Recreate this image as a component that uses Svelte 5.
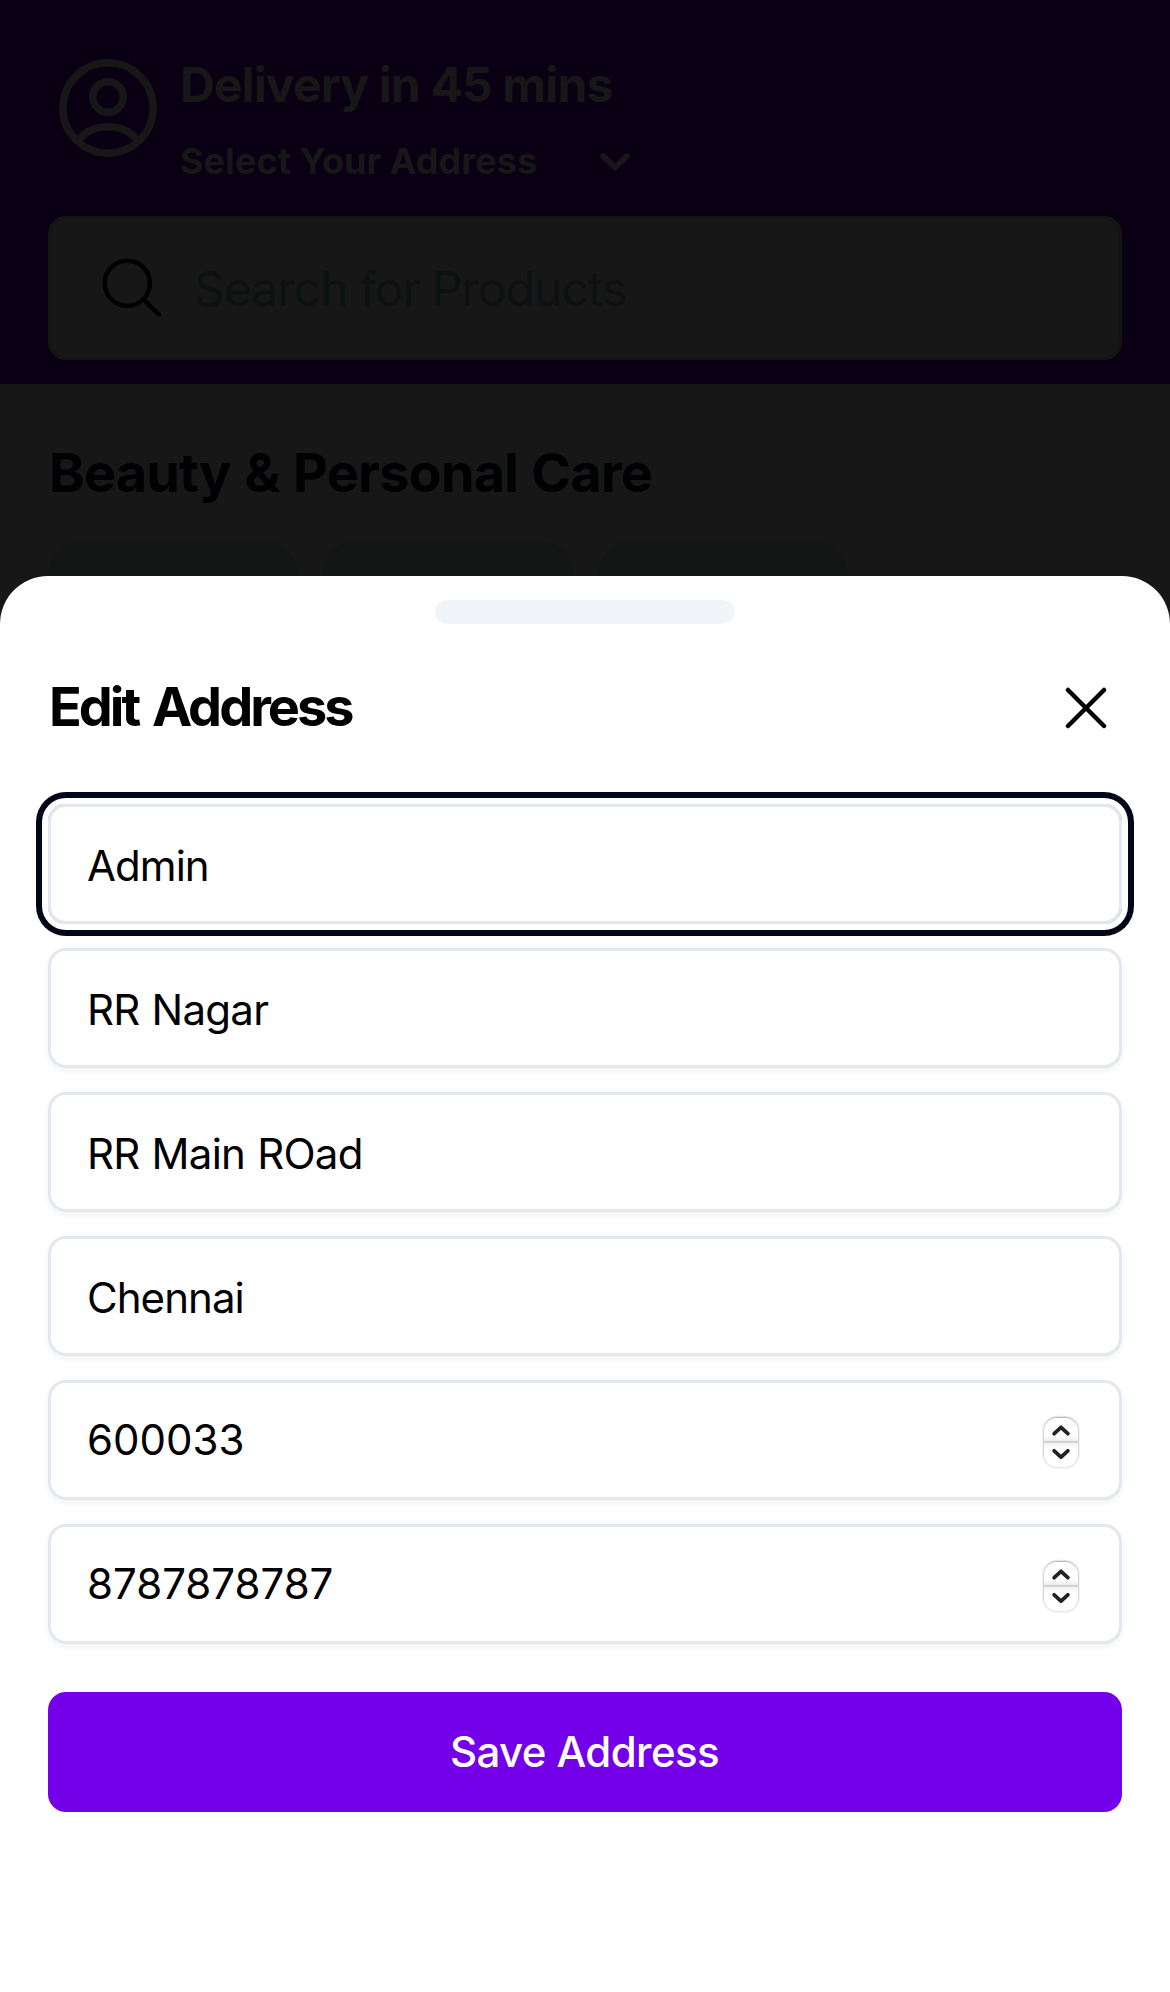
<script>
  const fields = [
    { name: 'name', value: 'Admin', kind: 'short', active: true },
    { name: 'area', value: 'RR Nagar', kind: 'line' },
    { name: 'street', value: 'RR Main ROad', kind: 'line' },
    { name: 'city', value: 'Chennai', kind: 'short' },
    { name: 'pincode', value: '600033', kind: 'numeric' },
    { name: 'phone', value: '8787878787', kind: 'numeric' },
  ];
</script>

<div class="screen">
  <header>
    <div class="top">
      <svg class="user" viewBox="0 0 98 98" fill="none" stroke="currentColor" stroke-width="7.5">
        <circle cx="49" cy="49" r="45.2" />
        <circle cx="49" cy="38" r="15.2" />
        <path d="M20 81C27 71.5 37 67.8 49 67.8S71 71.5 78 81" />
      </svg>
      <div class="where">
        <div class="eta">Delivery in 45 mins</div>
        <div class="pick">
          <span>Select Your Address</span>
          <svg class="chev" viewBox="0 0 30 18" fill="none" stroke="currentColor" stroke-width="6" stroke-linecap="round" stroke-linejoin="round"><path d="M3.2 3.2L15 14.6L26.8 3.2" /></svg>
        </div>
      </div>
    </div>
    <div class="search">
      <svg viewBox="0 0 60 60" fill="none" stroke="#000" stroke-width="4.4" stroke-linecap="round"><circle cx="25.3" cy="25.3" r="22.6" /><path d="M42 42L57 56.5" /></svg>
      <span>Search for Products</span>
    </div>
  </header>
  <section class="catalog">
    <h2>Beauty &amp; Personal Care</h2>
    <div class="cards"><i></i><i></i><i></i></div>
  </section>
  <div class="sheet">
    <div class="grip"></div>
    <div class="title">
      <h1>Edit Address</h1>
      <svg viewBox="0 0 42 42" fill="none" stroke="#000" stroke-width="4.5" stroke-linecap="round"><path d="M3 3L39 39M39 3L3 39" /></svg>
    </div>
    <form>
      {#each fields as f}
        <div class="field {f.kind}" class:active={f.active}>
          <input name={f.name} value={f.value} />
          {#if f.kind === 'numeric'}
            <div class="spin">
              <svg viewBox="0 0 34 50" fill="none" stroke="#222" stroke-width="3.8" stroke-linecap="round" stroke-linejoin="round"><path d="M10 16L17 9.5L24 16M10 33.5L17 40L24 33.5" /></svg>
            </div>
          {/if}
        </div>
      {/each}
      <button type="button">Save Address</button>
    </form>
  </div>
</div>

<style>
  :global(body) { margin: 0; background: #171717; }
  .screen { width: 1170px; height: 1992px; overflow: hidden; display: flex; flex-direction: column; background: #171717; font-family: Inter, 'Liberation Sans', sans-serif; }
  header { box-sizing: border-box; height: 384px; flex: none; padding: 59px 48px 24px; background: #090014; color: #171717; display: flex; flex-direction: column; justify-content: space-between; }
  .top { display: flex; padding-left: 11px; gap: 22px; }
  .user { width: 98px; height: 98px; flex: none; }
  .where { display: flex; flex-direction: column; padding-top: 1px; }
  .eta { padding-left: 1px; font-size: 48px; line-height: 50px; font-weight: 650; letter-spacing: -0.85px; white-space: nowrap; }
  .pick { display: flex; align-items: center; justify-content: space-between; width: 450px; height: 50px; margin-top: 26px; padding-left: 1px; font-size: 36px; line-height: 50px; font-weight: 700; letter-spacing: 0.05px; white-space: nowrap; }
  .chev { width: 30px; height: 18px; margin-top: 1px; }
  .search { box-sizing: border-box; height: 144px; border: 3px solid #141414; border-radius: 18px; background: #171717; display: flex; align-items: center; padding-left: 51px; gap: 32px; color: #0e1111; font-size: 48px; letter-spacing: -0.95px; word-spacing: -0.7px; }
  .search svg { width: 60px; height: 60px; }
  .catalog { height: 192px; flex: none; overflow: hidden; padding: 0 48px; }
  h2 { margin: 53px 0 0; line-height: 72px; font-size: 54px; font-weight: 700; letter-spacing: -0.85px; word-spacing: 1.5px; padding-left: 1px; color: #000102; white-space: nowrap; }
  .cards { display: flex; gap: 25px; margin-top: 31px; }
  .cards i { width: 250px; height: 250px; border-radius: 36px; background: #131615; }
  .sheet { position: relative; flex: 1; background: #fff; border-radius: 48px 48px 0 0; padding: 24px 48px 0; }
  .grip { width: 300px; height: 24px; margin: 0 auto; border-radius: 12px; background: #f1f5f9; }
  .title { height: 84px; margin-top: 42px; display: flex; align-items: center; justify-content: space-between; padding: 0 15px 0 1px; }
  h1 { margin: 0; padding-bottom: 2px; font-size: 54px; line-height: 72px; font-weight: 650; letter-spacing: -3px; word-spacing: 4px; color: #000; }
  .title svg { width: 42px; height: 42px; }
  form { margin-top: 54px; display: flex; flex-direction: column; gap: 24px; }
  .field { box-sizing: border-box; height: 120px; border: 3px solid #e2e8f0; border-radius: 18px; box-shadow: 0 3px 6px rgba(0, 0, 0, 0.05); display: flex; align-items: center; padding: 3px 41px 0 36px; letter-spacing: -0.75px; word-spacing: 1px; }
  .short { letter-spacing: -0.95px; }
  .numeric { padding-top: 0; padding-bottom: 1px; letter-spacing: 0; }
  .active { box-shadow: 0 0 0 6px #fff, 0 0 0 12px #020617; }
  input { flex: 1; min-width: 0; height: 60px; padding: 0; border: 0; outline: 0; background: none; color: #000; font: 400 42px Inter, 'Liberation Sans', sans-serif; letter-spacing: inherit; word-spacing: inherit; }
  .spin { width: 34px; height: 49px; margin-top: 6px; border-radius: 13px; background: linear-gradient(#fff 36%, #eee 46%, #d2d2d2 47%, #d2d2d2 51%, #f4f4f4 52%, #fff 62%); box-shadow: 0 -1px 2px rgba(0, 0, 0, 0.25), 0 0 3px rgba(0, 0, 0, 0.28); }
  .spin svg { display: block; width: 34px; height: 49px; }
  button { height: 120px; margin-top: 24px; padding: 0 1px 2px 0; border: 0; border-radius: 18px; background: #7300e8; color: #fff; font: 520 42px Inter, 'Liberation Sans', sans-serif; letter-spacing: -0.6px; }
</style>
